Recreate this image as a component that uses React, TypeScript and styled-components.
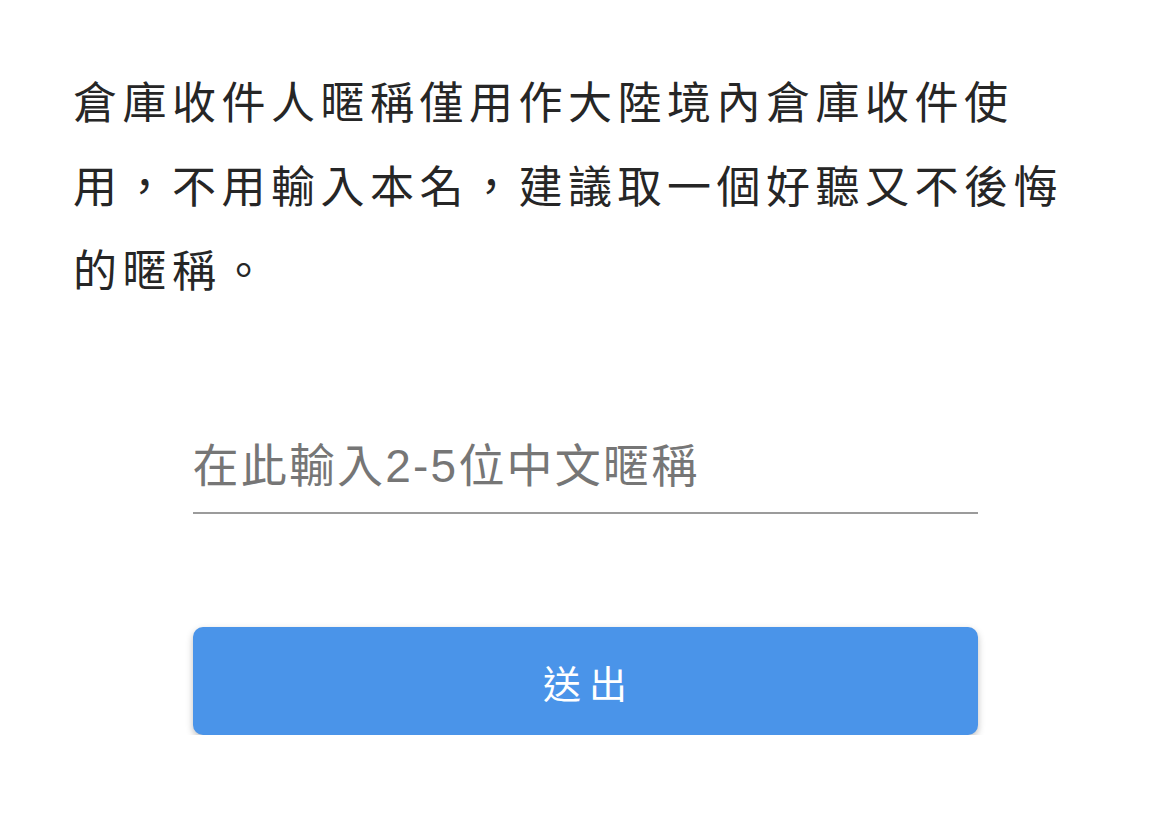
import React from "react";
import styled, { createGlobalStyle } from "styled-components";

const Global = createGlobalStyle`
  html, body { margin: 0; padding: 0; background: #fff; }
  body { font-family: "Noto Sans CJK TC", "Noto Sans", sans-serif; }
`;

const Page = styled.main`
  display: flex;
  flex-direction: column;
  align-items: center;
  padding: 58px 73px 0;
`;

const Notice = styled.p`
  align-self: stretch;
  margin: 0;
  font-size: 44px;
  line-height: 84px;
  letter-spacing: 5.5px;
  color: #262626;
`;

const Form = styled.form`
  width: 785px;
  display: flex;
  flex-direction: column;
  margin-top: 110px;
`;

const NameInput = styled.input`
  box-sizing: border-box;
  width: 100%;
  height: 94px;
  border: none;
  border-bottom: 2px solid #9b9b9b;
  outline: none;
  padding: 0;
  font-family: "Liberation Sans", "Noto Sans CJK TC", sans-serif;
  font-size: 46px;
  letter-spacing: 2.2px;
  color: #222;
  background: transparent;
  &::placeholder { color: #767676; }
`;

const Submit = styled.button`
  margin-top: 113px;
  height: 108px;
  border: none;
  border-radius: 10px;
  background: #4a94e9;
  color: #fff;
  font-family: inherit;
  font-size: 38px;
  letter-spacing: 8px;
  text-indent: 8px;
  box-shadow: 0 3px 7px rgba(0, 0, 0, 0.26);
  cursor: pointer;
`;

export default function App() {
  return (
    <>
      <Global />
      <Page>
        <Notice>
          倉庫收件人暱稱僅用作大陸境內倉庫收件使用，不用輸入本名，建議取一個好聽又不後悔的暱稱。
        </Notice>
        <Form onSubmit={(e) => e.preventDefault()}>
          <NameInput placeholder="在此輸入2-5位中文暱稱" />
          <Submit type="submit">送出</Submit>
        </Form>
      </Page>
    </>
  );
}
